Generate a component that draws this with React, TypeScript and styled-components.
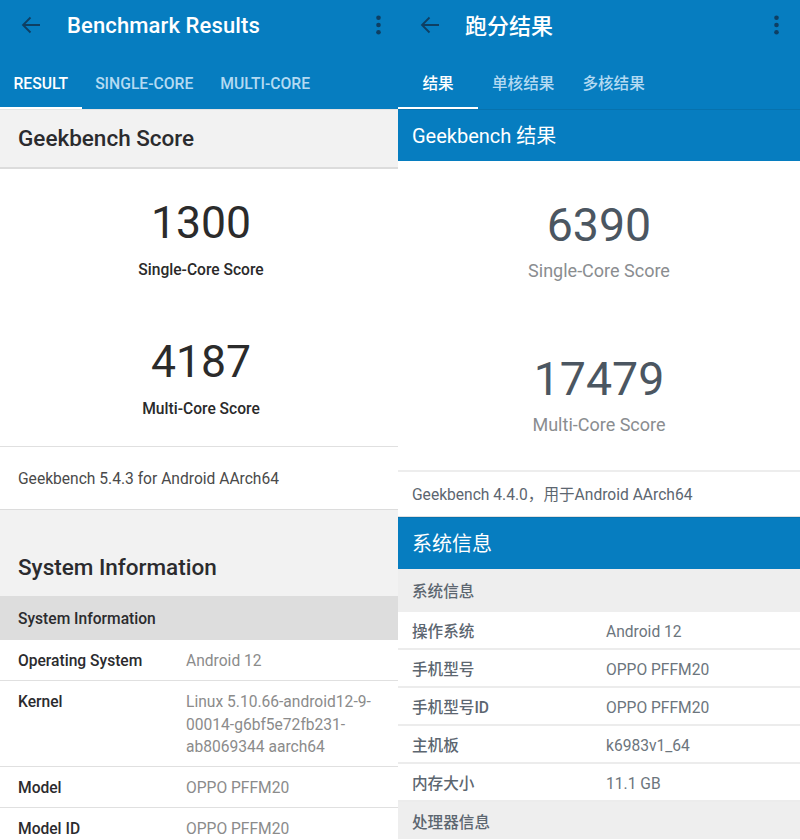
import React from 'react'
import styled, { createGlobalStyle } from 'styled-components'

const BLUE = '#067dc0'
const INK = '#0e3f63'

const GlobalStyle = createGlobalStyle`
  html, body {
    margin: 0;
    padding: 0;
    background: #fff;
  }
  body {
    font-family: Roboto, "Noto Sans CJK SC", sans-serif;
  }
`

const Page = styled.div`
  display: grid;
  grid-template-columns: 398px 402px;
  width: 800px;
  height: 840px;
  overflow: hidden;
`

const Panel = styled.section`
  display: flex;
  flex-direction: column;
  min-width: 0;
`

const AppBar = styled.header`
  height: 109px;
  flex: none;
  background: ${BLUE};
  display: flex;
  flex-direction: column;
`

const Toolbar = styled.div`
  height: 50px;
  display: flex;
  align-items: center;
`

const BackButton = styled.svg<{ $zh?: boolean }>`
  width: 20px;
  height: 18px;
  margin-left: ${(p) => (p.$zh ? '22px' : '21px')};
  flex: none;
`

const Title = styled.h1<{ $zh?: boolean }>`
  margin: 0 0 0 ${(p) => (p.$zh ? '25px' : '26px')};
  padding-bottom: ${(p) => (p.$zh ? '3px' : '0')};
  flex: 1;
  font-size: 22px;
  letter-spacing: ${(p) => (p.$zh ? '0' : '0.12px')};
  font-weight: 500;
  color: #fff;
`

const MoreButton = styled.svg<{ $zh?: boolean }>`
  width: 5px;
  height: 20px;
  margin-right: ${(p) => (p.$zh ? '21px' : '17px')};
  flex: none;
`

const Tabs = styled.nav`
  margin-top: auto;
  display: flex;
`

const Tab = styled.div<{ $active?: boolean; $zh?: boolean }>`
  height: 49px;
  box-sizing: border-box;
  min-width: ${(p) => (p.$zh ? '80px' : '0')};
  padding: 0 ${(p) => (p.$zh ? '14px' : '13.5px')} ${(p) => (p.$zh ? '3px' : '1px')};
  display: flex;
  align-items: center;
  justify-content: center;
  font-size: ${(p) => (p.$zh ? '15.6px' : '15.7px')};
  font-weight: 500;
  color: ${(p) => (p.$active ? '#fff' : '#b4daf2')};
  border-bottom: 2px solid ${(p) => (p.$active ? '#fff' : 'transparent')};
`

const ScoreHeading = styled.h2`
  margin: 0;
  height: 60px;
  box-sizing: border-box;
  padding: 0 18px 2px;
  display: flex;
  align-items: center;
  flex: none;
  background: #f2f2f2;
  border-top: 1px solid #e4e4e4;
  border-bottom: 2px solid #dcdcdc;
  font-size: 22.5px;
  font-weight: 500;
  color: #2b2b2e;
`

const BlueHeading = styled.h2`
  margin: 0;
  height: 52px;
  box-sizing: border-box;
  padding: 0 14px 3px;
  display: flex;
  align-items: center;
  flex: none;
  background: ${BLUE};
  border-top: 1px solid #0672ae;
  font-size: 20px;
  font-weight: 400;
  color: #fff;
`

const Scores = styled.div<{ $zh?: boolean }>`
  height: ${(p) => (p.$zh ? '311px' : '278px')};
  flex: none;
  box-sizing: border-box;
  padding: ${(p) => (p.$zh ? '34px 0 0' : '24px 0 0 4px')};
  display: flex;
  flex-direction: column;
  gap: ${(p) => (p.$zh ? '67px' : '50.5px')};
  border-bottom: ${(p) => (p.$zh ? '2px solid #ededed' : '1px solid #e0e0e0')};
`

const ScoreItem = styled.div`
  display: flex;
  flex-direction: column;
  align-items: center;
`

const ScoreValue = styled.div<{ $zh?: boolean }>`
  font-size: ${(p) => (p.$zh ? '46.5px' : '44.5px')};
  line-height: 60px;
  font-weight: 400;
  color: ${(p) => (p.$zh ? '#4b5661' : '#2b2b2b')};
`

const ScoreLabel = styled.div<{ $zh?: boolean }>`
  margin-top: ${(p) => (p.$zh ? '5px' : '6px')};
  font-size: ${(p) => (p.$zh ? '18px' : '15.6px')};
  line-height: 22px;
  font-weight: ${(p) => (p.$zh ? 400 : 500)};
  color: ${(p) => (p.$zh ? '#8a8d90' : '#2a2a2a')};
`

const VersionRow = styled.div<{ $zh?: boolean }>`
  height: ${(p) => (p.$zh ? '45px' : '63px')};
  flex: none;
  box-sizing: border-box;
  padding: ${(p) => (p.$zh ? '0 14px 2px' : '2px 18px 0')};
  display: flex;
  align-items: center;
  font-size: 15.6px;
  color: ${(p) => (p.$zh ? '#5c6670' : '#4a4a4a')};
  border-bottom: 1px solid ${(p) => (p.$zh ? '#e0e0e0' : '#dcdcdc')};
`

const SectionBand = styled.div`
  height: 86px;
  flex: none;
  box-sizing: border-box;
  padding: 0 18px 16px;
  display: flex;
  align-items: flex-end;
  background: #f2f2f2;
  font-size: 22.5px;
  font-weight: 500;
  color: #2b2b2e;
`

const GroupHeader = styled.div<{ $zh?: boolean; $tail?: boolean }>`
  height: ${(p) => (p.$tail ? '37px' : p.$zh ? '43px' : '44px')};
  flex: none;
  box-sizing: border-box;
  padding: ${(p) => (p.$tail ? '0 14px' : p.$zh ? '0 14px 2px' : '2px 18px 0')};
  display: flex;
  align-items: center;
  background: ${(p) => (p.$zh ? '#eeeeee' : '#dddddd')};
  font-size: 15.6px;
  font-weight: 500;
  color: ${(p) => (p.$zh ? '#5c6670' : '#2b2b2e')};
`

const InfoRow = styled.div<{ $zh?: boolean }>`
  display: grid;
  grid-template-columns: ${(p) => (p.$zh ? '194px 1fr' : '168px 1fr')};
  flex: none;
  padding: ${(p) => (p.$zh ? '9px 14px 5px' : '10px 18px 8px')};
  border-bottom: ${(p) => (p.$zh ? '2px solid #ececec' : '1px solid #e0e0e0')};
  font-size: 15.6px;
  line-height: ${(p) => (p.$zh ? '22px' : '22.3px')};
`

const InfoLabel = styled.div<{ $zh?: boolean }>`
  font-weight: 500;
  color: ${(p) => (p.$zh ? '#5c6670' : '#2b2b2e')};
`

const InfoValue = styled.div<{ $zh?: boolean }>`
  color: ${(p) => (p.$zh ? '#6c757d' : '#8b8b8b')};
`

const Arrow = ({ zh }: { zh?: boolean }) => (
  <BackButton $zh={zh} viewBox="0 0 20 18" fill="none" stroke={INK} strokeWidth="1.8">
    <path d="M19 9H2M9.5 1.5 2 9l7.5 7.5" />
  </BackButton>
)

const More = ({ zh }: { zh?: boolean }) => (
  <MoreButton $zh={zh} viewBox="0 0 5 20" fill={INK}>
    <circle cx="2.5" cy="2.8" r="2.3" />
    <circle cx="2.5" cy="10" r="2.3" />
    <circle cx="2.5" cy="17.2" r="2.3" />
  </MoreButton>
)

const leftRows = [
  ['Operating System', 'Android 12'],
  ['Kernel', 'Linux 5.10.66-android12-9-00014-g6bf5e72fb231-ab8069344 aarch64'],
  ['Model', 'OPPO PFFM20'],
  ['Model ID', 'OPPO PFFM20'],
]

const rightRows = [
  ['操作系统', 'Android 12'],
  ['手机型号', 'OPPO PFFM20'],
  ['手机型号ID', 'OPPO PFFM20'],
  ['主机板', 'k6983v1_64'],
  ['内存大小', '11.1 GB'],
]

export default function App() {
  return (
    <Page>
      <GlobalStyle />
      <Panel>
        <AppBar>
          <Toolbar>
            <Arrow />
            <Title>Benchmark Results</Title>
            <More />
          </Toolbar>
          <Tabs>
            <Tab $active>RESULT</Tab>
            <Tab>SINGLE-CORE</Tab>
            <Tab>MULTI-CORE</Tab>
          </Tabs>
        </AppBar>
        <ScoreHeading>Geekbench Score</ScoreHeading>
        <Scores>
          <ScoreItem>
            <ScoreValue>1300</ScoreValue>
            <ScoreLabel>Single-Core Score</ScoreLabel>
          </ScoreItem>
          <ScoreItem>
            <ScoreValue>4187</ScoreValue>
            <ScoreLabel>Multi-Core Score</ScoreLabel>
          </ScoreItem>
        </Scores>
        <VersionRow>Geekbench 5.4.3 for Android AArch64</VersionRow>
        <SectionBand>System Information</SectionBand>
        <GroupHeader>System Information</GroupHeader>
        {leftRows.map(([label, value]) => (
          <InfoRow key={label}>
            <InfoLabel>{label}</InfoLabel>
            <InfoValue>{value}</InfoValue>
          </InfoRow>
        ))}
      </Panel>
      <Panel>
        <AppBar>
          <Toolbar>
            <Arrow zh />
            <Title $zh>跑分结果</Title>
            <More zh />
          </Toolbar>
          <Tabs>
            <Tab $active $zh>结果</Tab>
            <Tab $zh>单核结果</Tab>
            <Tab $zh>多核结果</Tab>
          </Tabs>
        </AppBar>
        <BlueHeading>Geekbench 结果</BlueHeading>
        <Scores $zh>
          <ScoreItem>
            <ScoreValue $zh>6390</ScoreValue>
            <ScoreLabel $zh>Single-Core Score</ScoreLabel>
          </ScoreItem>
          <ScoreItem>
            <ScoreValue $zh>17479</ScoreValue>
            <ScoreLabel $zh>Multi-Core Score</ScoreLabel>
          </ScoreItem>
        </Scores>
        <VersionRow $zh>Geekbench 4.4.0，用于Android AArch64</VersionRow>
        <BlueHeading>系统信息</BlueHeading>
        <GroupHeader $zh>系统信息</GroupHeader>
        {rightRows.map(([label, value]) => (
          <InfoRow $zh key={label}>
            <InfoLabel $zh>{label}</InfoLabel>
            <InfoValue $zh>{value}</InfoValue>
          </InfoRow>
        ))}
        <GroupHeader $zh $tail>处理器信息</GroupHeader>
      </Panel>
    </Page>
  )
}
